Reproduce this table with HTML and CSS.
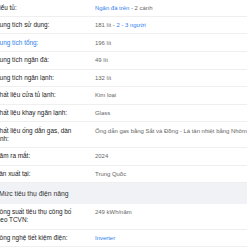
FILE: index.html
```html
<!DOCTYPE html>
<html lang="vi">
<head>
<meta charset="utf-8">
<link rel="stylesheet" href="styles.css">
</head>
<body>
<div class="specs">
  <div class="row"><div class="lbl">Kiểu tủ:</div><div class="val"><span class="link">Ngăn đá trên</span> - 2 cánh</div></div>
  <div class="row"><div class="lbl">Dung tích sử dụng:</div><div class="val">181 lít - <span class="link">2 - 3 người</span></div></div>
  <div class="row"><div class="lbl link">Dung tích tổng:</div><div class="val">196 lít</div></div>
  <div class="row"><div class="lbl">Dung tích ngăn đá:</div><div class="val">49 lít</div></div>
  <div class="row"><div class="lbl">Dung tích ngăn lạnh:</div><div class="val">132 lít</div></div>
  <div class="row"><div class="lbl">Chất liệu cửa tủ lạnh:</div><div class="val">Kim loại</div></div>
  <div class="row"><div class="lbl">Chất liệu khay ngăn lạnh:</div><div class="val">Glass</div></div>
  <div class="row"><div class="lbl">Chất liệu ống dẫn gas, dàn lạnh:</div><div class="val">Ống dẫn gas bằng Sắt và Đồng - Lá tản nhiệt bằng Nhôm</div></div>
  <div class="row"><div class="lbl">Năm ra mắt:</div><div class="val">2024</div></div>
  <div class="row"><div class="lbl">Sản xuất tại:</div><div class="val">Trung Quốc</div></div>
  <div class="section">Mức tiêu thụ điện năng</div>
  <div class="row"><div class="lbl">Công suất tiêu thụ công bố theo TCVN:</div><div class="val">249 kWh/năm</div></div>
  <div class="row"><div class="lbl">Công nghệ tiết kiệm điện:</div><div class="val link">Inverter</div></div>
  <div class="section"></div>
</div>
</body>
</html>
```
FILE: styles.css
```css
html, body {
  margin: 0;
  padding: 0;
  background: #fff;
  overflow: hidden;
}
.specs {
  margin: -0.8px 0 0 -5px;
  font-family: "Liberation Sans", Arial, sans-serif;
  font-size: 6.4px;
  line-height: 8px;
}
.row {
  display: flex;
  padding: 4.3px 0;
  border-bottom: 1px solid #efefef;
}
.lbl {
  width: 90px;
  padding-right: 10px;
  color: #222;
  flex: none;
}
.val {
  color: #666;
  font-size: 5.95px;
  white-space: nowrap;
}
.link {
  color: #2f80ed;
}
.section {
  background: #f1f2f6;
  padding: 6.5px 4px;
  color: #333;
  font-size: 6.8px;
  line-height: 8px;
  min-height: 8px;
}
```
